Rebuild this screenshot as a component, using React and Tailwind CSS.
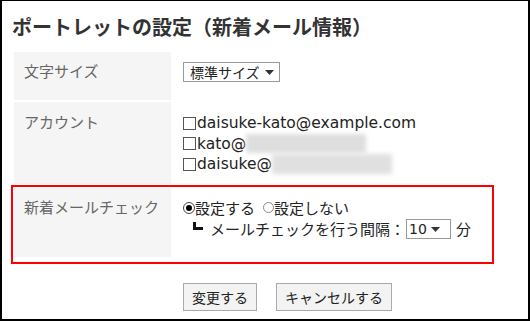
function Arrow() {
  return (
    <svg width="9" height="5" viewBox="0 0 9 5" className="shrink-0">
      <path d="M0 0H9L4.5 5Z" fill="#333" />
    </svg>
  );
}

function Check() {
  return <span className="inline-block w-[13px] h-[13px] border border-[#555] bg-white shrink-0 mr-px" />;
}

export default function App() {
  const label =
    "w-[157px] shrink-0 bg-[#f5f5f5] pl-[10px] pt-[8px] text-[15px] leading-[21px] text-[#666]";
  const latin = "font-['DejaVu_Sans','Noto_Sans_CJK_JP',sans-serif]";
  return (
    <div className="w-[530px] h-[321px] border-x-2 border-b-2 border-t border-black bg-white font-['Noto_Sans_CJK_JP',sans-serif] text-[#333]">
      <h1 className="mt-[12px] ml-[10px] h-[28px] leading-[28px] text-[20px] font-bold text-[#333]">
        ポートレットの設定（新着メール情報）
      </h1>
      <div className="mt-[11px] ml-[12px] w-[477px] flex flex-col">
        {/* Row 1 */}
        <div className="flex h-[48px]">
          <div className={label}>文字サイズ</div>
          <div className="pl-[12px] pt-[10px]">
            <div className="flex items-center w-[97px] h-[20px] border border-[#999] pl-[6px] text-[14px] leading-[18px] text-[#222]">
              <span>標準サイズ</span>
              <span className="ml-[5px]">
                <Arrow />
              </span>
            </div>
          </div>
        </div>
        {/* Row 2 */}
        <div className="flex h-[82px] mt-[2px]">
          <div className={label + " pt-[9px]"}>アカウント</div>
          <div className={"pl-[12px] pt-[11px] text-[15.5px] leading-[20.5px] text-[#222] " + latin}>
            <div className="flex items-center h-[20.5px]">
              <Check />
              <span>daisuke-kato@example.com</span>
            </div>
            <div className="flex items-center h-[20.5px]">
              <Check />
              <span>kato@</span>
              <span className="inline-block w-[120px] h-[19px] bg-[#dedede] blur-[2px]" />
            </div>
            <div className="flex items-center h-[20.5px]">
              <Check />
              <span>daisuke@</span>
              <span className="inline-block w-[120px] h-[20px] bg-[#e0e0e0] blur-[2px]" />
            </div>
          </div>
        </div>
        {/* Row 3 highlighted */}
        <div className="mt-px -mx-[3px] border-2 border-[#ff0000] p-px pb-[5px]">
          <div className="flex h-[69px]">
            <div className={label}>新着メールチェック</div>
            <div className="pl-[12px] pt-[9px] text-[15px] text-[#222]">
              <div className="flex items-center h-[21px] leading-[21px]">
                <span className="flex items-center justify-center w-[12px] h-[12px] rounded-full border border-[#444] shrink-0">
                  <span className="w-[6px] h-[6px] rounded-full bg-black" />
                </span>
                <span>設定する</span>
                <span className="ml-[8px] w-[11px] h-[11px] rounded-full border border-[#888] shrink-0" />
                <span>設定しない</span>
              </div>
              <div className="mt-px flex items-center h-[20px] leading-[20px]">
                <span className="ml-[10px] -mt-[6px] w-[10px] h-[8px] border-l-[3px] border-b-[3px] border-[#111] shrink-0" />
                <span className="ml-[7px]">メールチェックを行う間隔：</span>
                <div className="ml-px flex items-center w-[45px] h-[20px] border border-[#999] pl-[2px] text-[14px] leading-[18px]">
                  <span className={latin}>10</span>
                  <span className="ml-[4px]">
                    <Arrow />
                  </span>
                </div>
                <span className="ml-[5px]">分</span>
              </div>
            </div>
          </div>
        </div>
      </div>
      <div className="mt-[19px] ml-[181px] flex gap-[19px] text-[14px] text-[#222]">
        <button className="w-[74px] h-[28px] border border-[#aaa] bg-[#f3f3f3] flex items-center justify-center">
          変更する
        </button>
        <button className="w-[116px] h-[28px] border border-[#aaa] bg-[#f3f3f3] flex items-center justify-center">
          キャンセルする
        </button>
      </div>
    </div>
  );
}
